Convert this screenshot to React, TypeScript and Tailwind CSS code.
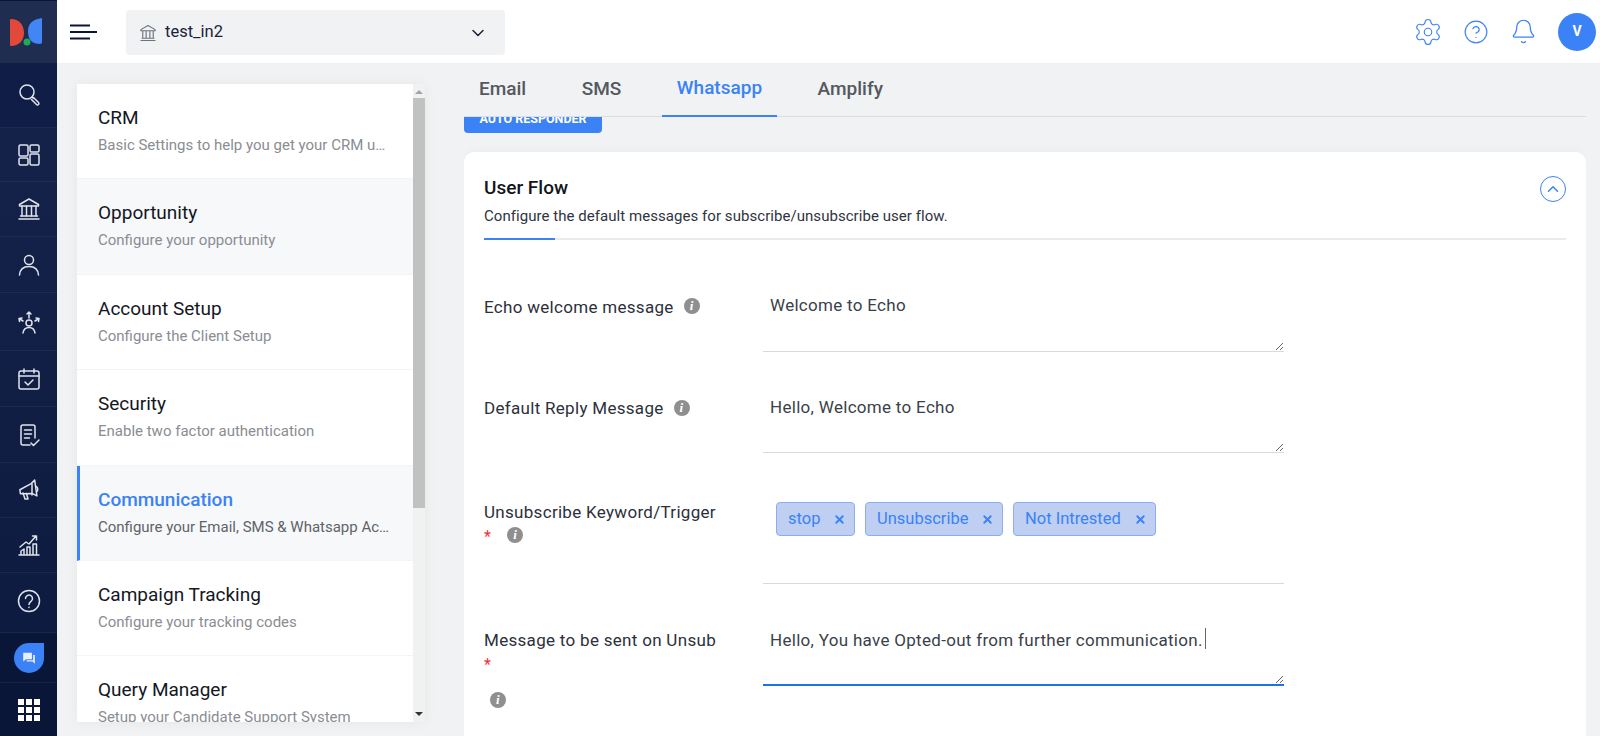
import { Bell, ChevronDown, ChevronUp, CircleHelp, Settings, X } from 'lucide-react'

const FONT = { fontFamily: 'Roboto, "Liberation Sans", sans-serif' }

// Sidebar icons, drawn to match the outlined set in the screenshot
const paths: Record<string, React.ReactNode> = {
  search: (
    <>
      <circle cx="10" cy="10" r="7" />
      <path d="M15 15l1.2 1.2" />
      <path d="M16.5 15.5l5 5a1.4 1.4 0 0 1-2 2l-5-5" />
    </>
  ),
  dashboard: (
    <>
      <rect x="2" y="2" width="9" height="11" rx="1.5" />
      <rect x="13" y="2" width="9" height="7" rx="1.5" />
      <rect x="2" y="15" width="9" height="7" rx="1.5" />
      <rect x="13" y="11" width="9" height="11" rx="1.5" />
    </>
  ),
  bank: (
    <>
      <path d="M12 2L2.5 7.5v1.5h19V7.5L12 2z" />
      <path d="M5 9v10M9.5 9v10M14.5 9v10M19 9v10" />
      <path d="M3.5 19h17M2 22h20" />
    </>
  ),
  user: (
    <>
      <circle cx="12" cy="7" r="4.5" />
      <path d="M2.5 22c.5-6 4.5-8.5 9.5-8.5s9 2.5 9.5 8.5" />
    </>
  ),
  people: (
    <>
      <circle cx="12" cy="13" r="3" />
      <path d="M6 23c.5-3.5 3-5.5 6-5.5s5.5 2 6 5.5" />
      <path d="M12 8V2M10 4l2-2 2 2M6 11L2 8.5M2.5 11.5L2 8.5l3-.5M18 11l4-2.5M21.5 11.5L22 8.5l-3-.5" />
    </>
  ),
  calendar: (
    <>
      <rect x="2" y="4" width="20" height="18" rx="2" />
      <path d="M2 9h20M7 2v4M17 2v4M8 15l3 3 5-5" />
    </>
  ),
  report: (
    <>
      <path d="M13 22H6a2 2 0 0 1-2-2V4a2 2 0 0 1 2-2h10a2 2 0 0 1 2 2v11" />
      <path d="M7.5 7h7M7.5 11h7M7.5 15h5M14 20l2.5 2.5L22 17" />
    </>
  ),
  megaphone: (
    <>
      <path d="M3 10.5l12-4.5 4-3v16l-4-3-12-1.5z" transform="rotate(-8 12 12)" />
      <path d="M15 6v11M6 15l2 6h3l-1.5-5.5" />
      <path d="M19 8.5c2 .5 2.5 4 .5 5.5" />
    </>
  ),
  chart: (
    <>
      <path d="M2 22h20M4 22v-4l3-2v6M10 22v-8h3v8M16 22V11h3.5v11" />
      <path d="M3 14l6-5 3 2 7-8M15.5 3H19.5v4" />
    </>
  ),
  help: (
    <>
      <circle cx="12" cy="12" r="10.5" />
      <path d="M8.5 9.5a3.5 3.5 0 1 1 5.5 2.9c-1.3.9-2 1.5-2 3" />
      <path d="M12 18.3v.2" />
    </>
  ),
}

const SideIcon = ({ name, size = 24 }: { name: string; size?: number }) => (
  <svg width={size} height={size} viewBox="0 0 24 24" fill="none" stroke="#dfe3ea" strokeWidth={1.5} strokeLinecap="round" strokeLinejoin="round">
    {paths[name]}
  </svg>
)

const navItems = [
  { name: 'dashboard', h: 'h-[54px]' },
  { name: 'bank', h: 'h-[55px]' },
  { name: 'user', h: 'h-[56px]' },
  { name: 'people', h: 'h-[58px]' },
  { name: 'calendar', h: 'h-[56px]' },
  { name: 'report', h: 'h-[56px]' },
  { name: 'megaphone', h: 'h-[55px]' },
  { name: 'chart', h: 'h-[55px]' },
  { name: 'help', h: 'h-[60px] pb-[4px]' },
]

const settings = [
  { title: 'CRM', sub: 'Basic Settings to help you get your CRM up and running' },
  { title: 'Opportunity', sub: 'Configure your opportunity', shade: true },
  { title: 'Account Setup', sub: 'Configure the Client Setup' },
  { title: 'Security', sub: 'Enable two factor authentication' },
  { title: 'Communication', sub: 'Configure your Email, SMS & Whatsapp Accounts', active: true },
  { title: 'Campaign Tracking', sub: 'Configure your tracking codes' },
  { title: 'Query Manager', sub: 'Setup your Candidate Support System' },
]

const tabs = [
  { name: 'Email' },
  { name: 'SMS' },
  { name: 'Whatsapp', active: true },
  { name: 'Amplify' },
]

const InfoDot = () => (
  <span className="inline-flex h-[16px] w-[16px] shrink-0 items-center justify-center rounded-full bg-[#8f8f8f] text-[13px] font-bold italic leading-none text-white" style={{ fontFamily: '"Liberation Serif", serif' }}>
    i
  </span>
)

const Star = () => <div className="h-[24px] text-[16px] leading-[24px] text-[#f0323c]">*</div>

const Tag = ({ label, w }: { label: string; w: string }) => (
  <span className={`flex h-[34px] ${w} items-center justify-between rounded-[4px] border border-[#8fadee] bg-[#bfcff2] pl-[11px] pr-[8px] text-[16.5px] text-[#3b82f6]`}>
    {label}
    <X size={13} strokeWidth={3.5} />
  </span>
)

function Sidebar() {
  return (
    <aside className="flex h-full w-[57px] shrink-0 flex-col bg-gradient-to-b from-[#16244c] to-[#0c1a3f]">
      <div className="flex h-[63px] items-center justify-start border-t border-[#0b1233] bg-[#1f2d50] pl-[9px]">
        <svg width="34" height="32" viewBox="0 0 34 32">
          <path d="M2 3C10 3 15 9 15 17 15 24 10 30 2 30Q1 30 1 29V4Q1 3 2 3z" fill="#e2493b" />
          <path d="M33 2Q19 4 19 15 19 28 31 28 33 28 33 26z" fill="#4285f4" />
          <circle cx="18" cy="26" r="3.5" fill="#1faa59" />
        </svg>
      </div>
      <div className="flex h-[65px] items-center justify-center border-b border-white/5 bg-[#101e47] pb-[3px]">
        <SideIcon name="search" />
      </div>
      {navItems.map((item) => (
        <div key={item.name} className={`flex ${item.h} items-center justify-center border-b border-white/5`}>
          <SideIcon name={item.name} />
        </div>
      ))}
      <div className="flex h-[50px] items-center justify-center border-b border-white/5 bg-[#0a1637]">
        <span className="flex h-[30px] w-[30px] items-center justify-center rounded-full rounded-tr-[4px] bg-[#3b82f6]">
          <svg width="14" height="14" viewBox="0 0 24 24" fill="#e8eefc">
            <path d="M2 3h15v11H7l-5 4zM19 7h3v15l-4-4H8v-2h11z" />
          </svg>
        </span>
      </div>
      <div className="flex flex-1 items-center justify-center bg-[#0a1637]">
        <div className="grid grid-cols-3 gap-[2px]">
          {Array.from({ length: 9 }).map((_, i) => (
            <span key={i} className="h-[6px] w-[6px] bg-white" />
          ))}
        </div>
      </div>
    </aside>
  )
}

function Header() {
  return (
    <header className="flex h-[63px] shrink-0 items-center bg-white pl-[13px] pr-[4px]">
      <svg width="28" height="16" viewBox="0 0 28 16" fill="#0c1238">
        <rect x="0" y="0.5" width="20" height="2" />
        <rect x="0" y="7" width="27" height="2" />
        <rect x="0" y="13.5" width="20" height="2" />
      </svg>
      <div className="ml-[28px] mt-[2px] flex h-[45px] w-[379px] items-center justify-between rounded-[4px] bg-[#f1f2f4] pl-[13px] pr-[17px] text-[16.5px] text-[#1a2238]">
        <span className="flex items-center gap-[8px]">
          <svg width="18" height="18" viewBox="0 0 24 24" fill="none" stroke="#6b7280" strokeWidth={1.5} strokeLinejoin="round">
            <path d="M12 2L2.5 7.5v1.5h19V7.5L12 2zM5 9v10M9.5 9v10M14.5 9v10M19 9v10M3.5 19h17M2 22h20" />
          </svg>
          test_in2
        </span>
        <ChevronDown size={20} strokeWidth={1.8} className="text-[#1a2238]" />
      </div>
      <div className="ml-auto flex items-center text-[#3b82f6]">
        <Settings size={30} strokeWidth={0.9} />
        <CircleHelp size={26} strokeWidth={1.1} className="ml-[20px]" />
        <Bell size={27} strokeWidth={1.1} className="ml-[21px]" />
        <span className="ml-[21px] flex h-[38px] w-[38px] items-center justify-center rounded-full bg-[#3b82f6] text-[14px] font-bold text-white">V</span>
      </div>
    </header>
  )
}

function SettingsList() {
  return (
    <div className="w-[407px] shrink-0 pl-[20px] pt-[21px]">
      <div className="flex h-[638px] w-[348px] overflow-hidden bg-white shadow-[0_0_12px_rgba(0,0,0,0.05)]">
        <div className="w-[336px]">
          {settings.map((s) => (
            <div
              key={s.title}
              className={`h-[95.4px] border-b border-[#f3f4f6] pt-[22px] pr-[22px] ${s.active ? 'border-l-[3px] border-l-[#3b82f6] bg-[#f7f8fa] pl-[18px]' : 'pl-[21px]'} ${s.shade ? 'bg-[#f7f8fa]' : ''}`}
            >
              <div className={`text-[19px] leading-[24px] ${s.active ? 'font-medium text-[#3b82f6]' : 'text-[#14171f]'}`}>{s.title}</div>
              <div className={`mt-[5px] truncate text-[15px] leading-[20px] ${s.active ? 'text-[#5f6368]' : 'text-[#8a8d93]'}`}>{s.sub}</div>
            </div>
          ))}
        </div>
        <div className="flex w-[12px] flex-col items-center bg-[#f1f1f1]">
          <span className="mt-[6px] h-0 w-0 border-x-[4px] border-b-[4px] border-x-transparent border-b-[#a3a3a3]" />
          <span className="mt-[4px] h-[410px] w-full bg-[#c1c1c1]" />
          <span className="mb-[6px] mt-auto h-0 w-0 border-x-[4px] border-t-[4px] border-x-transparent border-t-[#333]" />
        </div>
      </div>
    </div>
  )
}

const labelText = 'text-[17px] leading-[24px] tracking-[0.3px] text-[#2c303a]'
const fieldText = 'w-[521px] border-b border-[#d9d9d9] bg-transparent px-[7px] text-[17px] leading-[24px] tracking-[0.3px] text-[#3a3f4a] outline-none'

function UserFlow() {
  return (
    <div className="rounded-t-[10px] bg-white px-[20px] pb-[60px] pt-[24px] shadow-[0_0_10px_rgba(0,0,0,0.04)]">
      <div className="flex items-start justify-between">
        <div>
          <div className="text-[19px] font-medium leading-[24px] text-[#12151c]">User Flow</div>
          <div className="mt-[6px] text-[15px] leading-[20px] tracking-[0.05px] text-[#2f3440]">Configure the default messages for subscribe/unsubscribe user flow.</div>
        </div>
        <span className="flex h-[26px] w-[26px] items-center justify-center rounded-full border border-[#3b82f6] text-[#3b82f6]">
          <ChevronUp size={18} strokeWidth={2} />
        </span>
      </div>
      <div className="mt-[12px] h-[2px] bg-[#e9eaec]">
        <div className="h-[2px] w-[71px] bg-[#3b82f6]" />
      </div>

      <div className="mt-[43px] flex">
        <div className={`flex w-[279px] items-start gap-[10px] pt-[12px] ${labelText}`}>
          Echo welcome message
          <span className="-mt-[3px]"><InfoDot /></span>
        </div>
        <textarea className={`${fieldText} h-[69px] pt-[10px]`} defaultValue="Welcome to Echo" />
      </div>

      <div className="mt-[32px] flex">
        <div className={`flex w-[279px] items-start gap-[10px] pt-[12px] ${labelText}`}>
          Default Reply Message
          <span className="-mt-[2px]"><InfoDot /></span>
        </div>
        <textarea className={`${fieldText} h-[69px] pt-[11px]`} defaultValue="Hello, Welcome to Echo" />
      </div>

      <div className="mt-[32px] flex">
        <div className={`w-[279px] pt-[15px] ${labelText}`}>
          Unsubscribe Keyword/Trigger
          <div className="flex items-start gap-[16px]">
            <div className="mt-[1px]"><Star /></div>
            <div className="-mt-[3px]"><InfoDot /></div>
          </div>
        </div>
        <div className="flex h-[99px] w-[521px] items-start gap-[10px] border-b border-[#d9d9d9] pl-[13px] pt-[17px]">
          <Tag label="stop" w="w-[79px]" />
          <Tag label="Unsubscribe" w="w-[138px]" />
          <Tag label="Not Intrested" w="w-[143px]" />
        </div>
      </div>

      <div className="mt-[33px] flex">
        <div className={`w-[279px] pt-[11px] ${labelText}`}>
          Message to be sent on Unsub
          <div className="mt-[1px]"><Star /></div>
          <div className="ml-[6px] mt-[9px]"><InfoDot /></div>
        </div>
        <div className="relative h-[69px]">
          <textarea
            className="h-[69px] w-[521px] border-b-2 border-[#1a73e8] bg-transparent px-[7px] pt-[11px] text-[17px] leading-[24px] tracking-[0.3px] text-[#3a3f4a] outline-none"
            defaultValue="Hello, You have Opted-out from further communication."
          />
          <span className="absolute left-[442px] top-[11px] h-[21px] w-px bg-[#666]" />
        </div>
      </div>
    </div>
  )
}

export default function App() {
  return (
    <div className="flex h-[736px] w-[1600px] overflow-hidden bg-[#f1f2f4]" style={FONT}>
      <Sidebar />
      <div className="flex min-w-0 flex-1 flex-col">
        <Header />
        <div className="flex min-h-0 flex-1">
          <SettingsList />
          <div className="flex w-[1122px] flex-col">
            <div className="flex h-[54px] shrink-0 items-end gap-[25.5px] border-b border-[#dcdde0] bg-[#f1f2f4]">
              {tabs.map((t) => (
                <div
                  key={t.name}
                  className={`-mb-px flex h-[53px] items-center px-[15px] pb-[2px] text-[19px] font-medium ${t.active ? 'border-b-2 border-[#3b82f6] text-[#3b82f6]' : 'text-[#55585f]'}`}
                >
                  {t.name}
                </div>
              ))}
            </div>
            <div className="min-h-0 flex-1 overflow-hidden">
              <button className="-mt-[11px] block h-[27px] w-[138px] rounded-[4px] bg-[#3b82f6] text-[12.5px] font-bold uppercase text-white">
                Auto Responder
              </button>
              <div className="mt-[19px]">
                <UserFlow />
              </div>
            </div>
          </div>
        </div>
      </div>
    </div>
  )
}
